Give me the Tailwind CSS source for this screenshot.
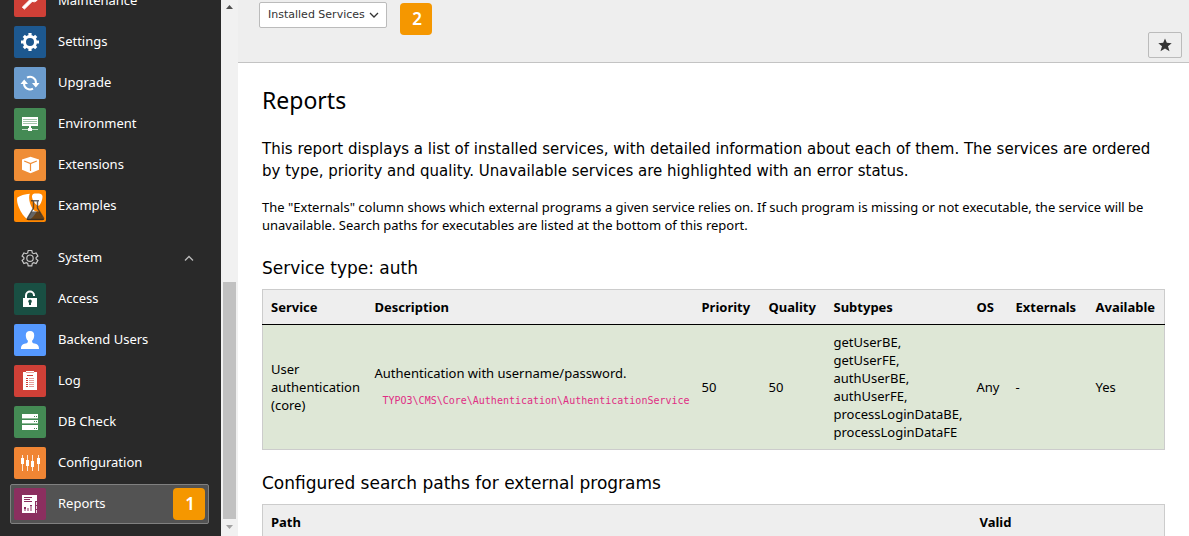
<!DOCTYPE html>
<html lang="en">
<head>
<meta charset="utf-8">
<meta name="viewport" content="width=device-width, initial-scale=1">
<title>Reports</title>
<script src="https://cdn.jsdelivr.net/npm/@tailwindcss/browser@4"></script>
</head>
<body class="flex h-screen overflow-hidden bg-white font-['Noto_Sans',sans-serif] text-[13px] leading-[18px] text-black">

<nav aria-label="Modules" class="flex w-[221px] shrink-0 flex-col justify-end gap-px overflow-hidden bg-[#292929] pr-3 pb-3 pl-[10px] text-white">
  <a href="#" class="flex h-10 shrink-0 items-center gap-3 rounded-xs border border-transparent px-[3px]">
    <svg class="size-8 rounded-xs bg-[#cf4037]" viewBox="0 0 32 32"><path d="M8.300 22.200l7.800-7.700a4.600 4.600 0 0 1 5.800-6l-2.800 2.800.5 1.700 1.800.4 2.700-2.600a4.600 4.600 0 0 1-6 5.700L10.500 24z" fill="#fff" stroke="#fff" stroke-width="1"/></svg>
    <span class="pb-0.5">Maintenance</span>
  </a>
  <a href="#" class="flex h-10 shrink-0 items-center gap-3 rounded-xs border border-transparent px-[3px]">
    <svg class="size-8 rounded-xs bg-[#1d588f]" viewBox="0 0 32 32"><circle cx="16" cy="16" r="5.500" fill="none" stroke="#fff" stroke-width="3"/><g stroke="#fff" stroke-width="3.200"><path d="M16 7v3M16 22v3M7 16h3M22 16h3M9.800 9.800l2 2M20.200 20.200l2 2M9.800 22.200l2-2M20.200 11.800l2-2"/></g></svg>
    <span class="pb-0.5">Settings</span>
  </a>
  <a href="#" class="flex h-10 shrink-0 items-center gap-3 rounded-xs border border-transparent px-[3px]">
    <svg class="size-8 rounded-xs bg-[#6c9ccd]" viewBox="0 0 32 32"><g fill="none" stroke="#fff" stroke-width="2"><path d="M13 10.700A6 6 0 0 1 22 16"/><path d="M19 21.700A6 6 0 0 1 10 16.500"/></g><path d="M18 16h7.500L21.800 20.500zM6.500 17h7.500L10.200 12.500z" fill="#fff"/></svg>
    <span class="pb-0.5">Upgrade</span>
  </a>
  <a href="#" class="flex h-10 shrink-0 items-center gap-3 rounded-xs border border-transparent px-[3px]">
    <svg class="size-8 rounded-xs bg-[#448a54]" viewBox="0 0 32 32"><path d="M8 9h16v9H8z" fill="#fff"/><path d="M9 11.500h14M9 13.500h14M9 15.500h14" stroke="#a1c4a9"/><path d="M15 18h2v2h1v3h-4v-3h1z" fill="#fff"/><path d="M8 21.500h6M18 21.500h6" stroke="#c6ddcb"/></svg>
    <span class="pb-0.5">Environment</span>
  </a>
  <a href="#" class="flex h-10 shrink-0 items-center gap-3 rounded-xs border border-transparent px-[3px]">
    <svg class="size-8 rounded-xs bg-[#ef8d36]" viewBox="0 0 32 32"><path d="M16.500 7.800l8.500 2.700v10.300l-8.500 3.400L8 20.800V10.500z" fill="#fff"/><path d="M10.200 12l6.300 2.600 6.300-2.600M16.500 14.600V22" fill="none" stroke="#ef8d36" stroke-width="1.200"/></svg>
    <span class="pb-0.5">Extensions</span>
  </a>
  <a href="#" class="flex h-10 shrink-0 items-center gap-3 rounded-xs border border-transparent px-[3px]">
    <svg class="size-8 rounded-xs bg-[#ff8700]" viewBox="0 0 32 32"><path d="M3.300 7.500C6 5.500 11 4 15.800 3.700c-2 4.300.8 14.500 5.200 17.300.8.300 1.300.2 2-.1-2.500 4.500-5.800 8.600-8 8.600C10.200 29.500 1.500 14.500 3.300 7.500zM18 6.500c0-2.500 1.600-2.900 4.600-2.900 3.500 0 5.900.5 5.900 3 0 3.500-2.400 9.200-3.900 9.200C22 15.800 18 10 18 6.500z" fill="#fff"/><path d="M17 10.800h8M19.500 11v7l-6 10q-.5 1.500 1 1.500h14q1.500 0 1-1.500L23.500 18v-7" fill="none" stroke="#333" stroke-opacity=".75" stroke-width="1.400"/><path d="M17.500 21.500h8l4.500 8.500H12.500z" fill="#222" fill-opacity=".7"/></svg>
    <span class="pb-0.5">Examples</span>
  </a>
  <button type="button" aria-expanded="true" class="mt-[11px] flex h-10 shrink-0 items-center gap-3 px-1 text-left">
    <svg class="size-8" viewBox="0 0 32 32" fill="none" stroke="#c8c8c8" stroke-width="1.200"><path d="M14.200 8.500h3.600l.5 2.400 1.400.8 2.400-.8 1.800 3.100-1.800 1.500v1.400l1.800 1.500-1.800 3.100-2.400-.8-1.400.8-.5 2.400h-3.600l-.5-2.400-1.400-.8-2.400.8-1.800-3.100 1.800-1.500v-1.400l-1.800-1.500 1.800-3.100 2.400.8 1.400-.8z"/><circle cx="16" cy="16.200" r="3.200"/></svg>
    <span class="grow pb-0.5">System</span>
    <svg class="mr-[11px] size-[10px]" viewBox="0 0 10 10" fill="none" stroke="#bbb" stroke-width="1.300"><path d="M1 7.500l4-4 4 4"/></svg>
  </button>
  <a href="#" class="flex h-10 shrink-0 items-center gap-3 rounded-xs border border-transparent px-[3px]">
    <svg class="size-8 rounded-xs bg-[#194f43]" viewBox="0 0 32 32"><path d="M12 16v-3.500a4 4 0 0 1 8 0V13" fill="none" stroke="#fff" stroke-width="2"/><path d="M9 15h14v9H9z" fill="#fff"/><path d="M14.200 18.500a1.800 1.800 0 1 1 2.800 1.400V22h-2v-2.100z" fill="#194f43"/></svg>
    <span class="pb-0.5">Access</span>
  </a>
  <a href="#" class="flex h-10 shrink-0 items-center gap-3 rounded-xs border border-transparent px-[3px]">
    <svg class="size-8 rounded-xs bg-[#5599ff]" viewBox="0 0 32 32"><path d="M16 7c3 0 4.300 1.800 4.200 4.400-.1 2.200-.8 4-2 5.100-.4 2 .3 2.500 2.300 3.100 2.800.8 4.500 1.400 4.500 5.400H7c0-4 1.700-4.600 4.500-5.400 2-.6 2.700-1.100 2.300-3.100-1.200-1.100-1.900-2.900-2-5.100C11.700 8.800 13 7 16 7z" fill="#fff"/></svg>
    <span class="pb-0.5">Backend Users</span>
  </a>
  <a href="#" class="flex h-10 shrink-0 items-center gap-3 rounded-xs border border-transparent px-[3px]">
    <svg class="size-8 rounded-xs bg-[#cf4037]" viewBox="0 0 32 32"><path d="M9 7h3V6h8v1h3v18H9z" fill="#fff"/><path d="M12 7.500h8M15 13.500h5M15 15.500h5M15 17.500h5M15 19.500h5M15 21.500h5" stroke="#e7a09b"/><path d="M13 10.500h6M12 13.500h2M12 15.500h2M12 17.500h2M12 19.500h2M12 21.500h2" stroke="#cf4037"/></svg>
    <span class="pb-0.5">Log</span>
  </a>
  <a href="#" class="flex h-10 shrink-0 items-center gap-3 rounded-xs border border-transparent px-[3px]">
    <svg class="size-8 rounded-xs bg-[#448a54]" viewBox="0 0 32 32"><path d="M8 8h16v4H8zM8 14h16v3H8zM8 19h16v5H8z" fill="#fff"/><path d="M8 12.500h16M8 17.500h16" stroke="#fff" stroke-opacity=".4"/><path d="M20 10h1v1h-1zM22 10h1v1h-1zM20 15h1v1h-1zM22 15h1v1h-1zM20 22h1v1h-1zM22 22h1v1h-1z" fill="#448a54"/></svg>
    <span class="pb-0.5">DB Check</span>
  </a>
  <a href="#" class="flex h-10 shrink-0 items-center gap-3 rounded-xs border border-transparent px-[3px]">
    <svg class="size-8 rounded-xs bg-[#f08534]" viewBox="0 0 32 32"><path d="M8.500 8v16M13.500 8v16M18.500 8v16M24.500 8v16" stroke="#fff" stroke-opacity=".8"/><path d="M7 11h3v6H7zM12 13h3v6h-3zM17 14h3v6h-3zM23 11h3v6h-3z" fill="#fff"/></svg>
    <span class="pb-0.5">Configuration</span>
  </a>
  <a href="#" aria-current="page" class="flex h-10 shrink-0 items-center gap-3 rounded-xs border border-[#808080] bg-[#535353] px-[3px]">
    <svg class="size-8 rounded-xs bg-[#8b2f5f]" viewBox="0 0 32 32"><path d="M8 7h15v6h-2v12H8z" fill="#fff"/><path d="M10 9.500h8M10 11.500h6M10 13.500h8" stroke="#8b2f5f"/><path d="M10 19h2v4h-2zM13 20h2v3h-2zM16 17h2v6h-2z" fill="#c597af"/><path d="M10 19h2v2h-2zM16 17h2v1h-2z" fill="#8b2f5f"/><path d="M22.500 14v11" stroke="#fff" stroke-opacity=".8" stroke-dasharray="3 1"/></svg>
    <span class="grow pb-0.5">Reports</span>
    <span class="flex size-8 items-center justify-center rounded-sm bg-[#f59700] pl-[2px] text-[17px] font-semibold">1</span>
  </a>
</nav>

<div aria-hidden="true" class="flex w-[17px] shrink-0 flex-col items-center bg-[#f1f1f1]">
  <svg class="h-[17px] w-[17px] shrink-0" viewBox="0 0 17 17"><path d="M5 9h7L8.500 5z" fill="#505050"/></svg>
  <div class="grow"></div>
  <div class="h-[237px] w-[13px] shrink-0 bg-[#c1c1c1]"></div>
  <svg class="h-[17px] w-[17px] shrink-0" viewBox="0 0 17 17"><path d="M5 6h7L8.500 10z" fill="#a3a3a3"/></svg>
</div>

<div class="flex min-w-0 grow flex-col overflow-hidden">
  <header class="shrink-0 border-b border-[#c3c3c3] bg-[#eee] pr-[7px] pb-1 pl-[21px]">
    <div class="flex h-8 items-start gap-[13px] pt-[2px]">
      <div class="grid shrink-0">
        <select aria-label="Report" class="col-start-1 row-start-1 h-[26px] w-[128px] appearance-none rounded-xs border border-[#bbb] bg-white pl-2 font-['DejaVu_Sans',sans-serif] text-[11px] text-[#333]">
          <option>Installed Services</option>
        </select>
        <svg class="pointer-events-none col-start-1 row-start-1 mr-2 size-[10px] self-center justify-self-end" viewBox="0 0 10 10" fill="none" stroke="#333" stroke-width="1.300"><path d="M1 3l4 4 4-4"/></svg>
      </div>
      <span class="mt-px flex size-8 shrink-0 items-center justify-center rounded-sm bg-[#f59700] pl-[2px] text-[17px] font-semibold text-white">2</span>
    </div>
    <div class="flex justify-end">
      <button type="button" aria-label="Bookmark this page" class="flex h-[26px] w-[34px] items-center justify-center rounded-xs border border-[#bbb] bg-[#eee]">
        <svg class="size-4" viewBox="0 0 16 16"><path d="M8 1.500l1.800 4.300 4.900.4-3.700 3.100 1.500 5L8 11.600 3.500 14.300l1.500-5L1.300 6.200l4.900-.4z" fill="#333"/></svg>
      </button>
    </div>
  </header>

  <main class="px-6">
    <h1 class="mt-[23px] text-[23px] leading-[28px]">Reports</h1>
    <p class="mt-6 font-['DejaVu_Sans',sans-serif] text-[15px] leading-[22px]">This report displays a list of installed services, with detailed information about each of them. The services are ordered by type, priority and quality. Unavailable services are highlighted with an error status.</p>
    <p class="mt-4">The "Externals" column shows which external programs a given service relies on. If such program is missing or not executable, the service will be unavailable. Search paths for executables are listed at the bottom of this report.</p>
    <h2 class="mt-6 font-['DejaVu_Sans',sans-serif] text-[17px] leading-[20px]">Service type: auth</h2>
    <table class="mt-[11px] w-full table-fixed border-collapse border border-[#ccc] text-left">
      <colgroup><col class="w-[104px]"><col><col class="w-[67px]"><col class="w-[65px]"><col class="w-[143px]"><col class="w-[39px]"><col class="w-[80px]"><col class="w-[77px]"></colgroup>
      <thead class="border-b border-black bg-[#eee]">
        <tr><th class="py-2 pl-2">Service</th><th class="py-2 pl-2">Description</th><th class="py-2 pl-2">Priority</th><th class="py-2 pl-2">Quality</th><th class="py-2 pl-2">Subtypes</th><th class="py-2 pl-2">OS</th><th class="py-2 pl-2">Externals</th><th class="py-2 pl-2">Available</th></tr>
      </thead>
      <tbody class="bg-[#dee7d6]">
        <tr>
          <td class="py-2 pl-2">User authentication (core)</td>
          <td class="py-2 pl-2"><p>Authentication with username/password.</p><p class="mt-2 pl-2"><code class="font-['DejaVu_Sans_Mono',monospace] text-[10px] text-[#e02d84]">TYPO3\CMS\Core\Authentication\AuthenticationService</code></p></td>
          <td class="py-2 pl-2">50</td>
          <td class="py-2 pl-2">50</td>
          <td class="py-2 pl-2">getUserBE,<br>getUserFE,<br>authUserBE,<br>authUserFE,<br>processLoginDataBE,<br>processLoginDataFE</td>
          <td class="py-2 pl-2">Any</td>
          <td class="py-2 pl-2">-</td>
          <td class="py-2 pl-2">Yes</td>
        </tr>
      </tbody>
    </table>
    <h2 class="mt-[23px] font-['DejaVu_Sans',sans-serif] text-[17px] leading-[20px]">Configured search paths for external programs</h2>
    <table class="mt-[11px] w-full table-fixed border-collapse border border-[#ccc] text-left">
      <colgroup><col><col class="w-[193px]"></colgroup>
      <thead class="border-b border-black bg-[#eee]">
        <tr><th class="py-2 pl-2">Path</th><th class="py-2 pl-2">Valid</th></tr>
      </thead>
    </table>
  </main>
</div>
</body>
</html>
